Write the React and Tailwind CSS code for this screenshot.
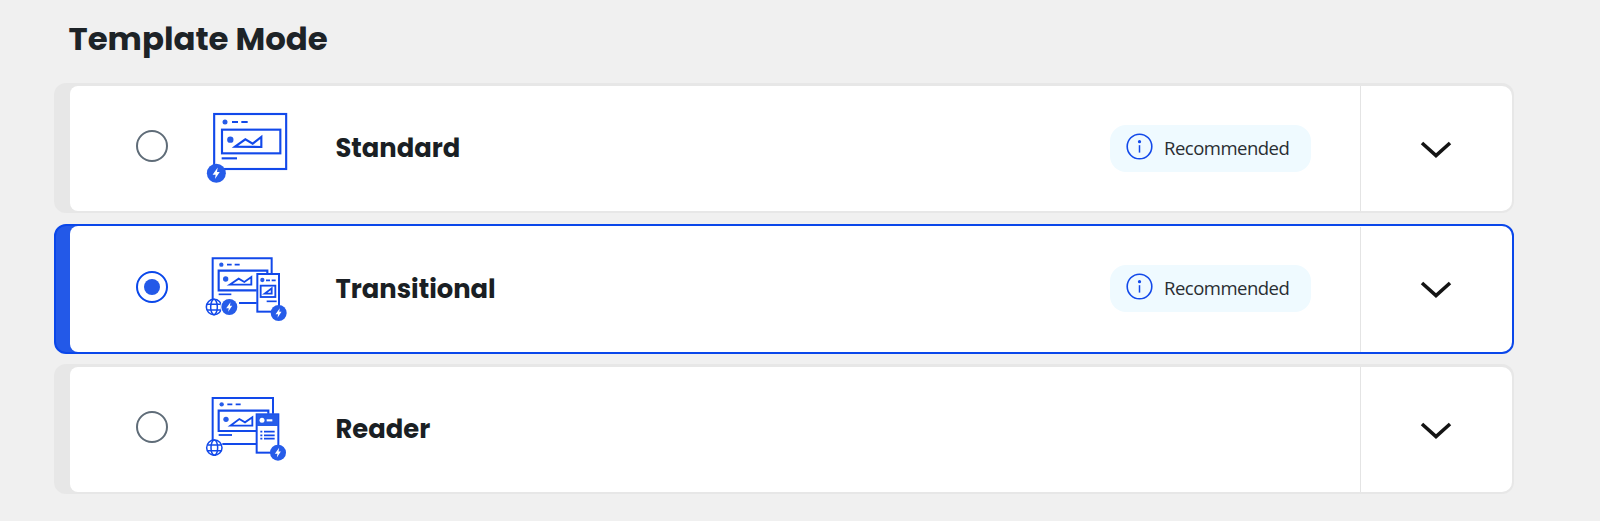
// ==========================================
// TemplateModes — pick how page templates are served
// ==========================================
import { useState } from "react";
import clsx from "clsx";

const MODES = [
  { id: "standard", title: "Standard", recommended: true, Icon: StandardIcon },
  {
    id: "transitional",
    title: "Transitional",
    recommended: true,
    Icon: TransitionalIcon,
  },
  { id: "reader", title: "Reader", recommended: false, Icon: ReaderIcon },
];

function IconFrame({ children }) {
  return (
    <svg
      viewBox="0 0 330 285"
      className="h-[95px] w-[110px] shrink-0"
      fill="none"
      stroke="#1249ea"
      strokeWidth="6.4"
    >
      {children}
    </svg>
  );
}

function Bolt({ cx, cy, r }) {
  return (
    <g transform={`translate(${cx} ${cy}) scale(${r / 28})`} stroke="none">
      <circle r="28" fill="#265ce9" />
      <path d="M4 -17 L-11 4 H-2 L-4 17 L10 -4 H2 Z" fill="#fff" />
    </g>
  );
}

function Globe({ cx, cy }) {
  return (
    <g transform={`translate(${cx} ${cy})`} strokeWidth="4.5">
      <circle r="23" fill="#fff" />
      <ellipse rx="10" ry="23" />
      <path d="M-21 -8 H21 M-21 9 H21" />
    </g>
  );
}

function StandardIcon() {
  return (
    <IconFrame>
      <rect x="72.5" y="42" width="216" height="165" />
      <circle cx="105" cy="66" r="7.5" fill="#265ce9" stroke="none" />
      <path d="M126 66 H144 M154 66 H173" />
      <rect x="96" y="89" width="175" height="71" />
      <circle cx="121" cy="119" r="9.5" fill="#265ce9" stroke="none" />
      <path d="M135 140 L166 118 L188 131 L214 111 V141 Z" />
      <path d="M95 175 H141" />
      <Bolt cx={79} cy={220} r={28.5} />
    </IconFrame>
  );
}

function TransitionalIcon() {
  return (
    <IconFrame>
      <g transform="translate(0 -3)">
        <path d="M68 182 V55 H245 V101 M147 189 H200" strokeWidth="6" />
        <circle cx="94" cy="74" r="6.5" fill="#265ce9" stroke="none" />
        <path d="M111 74 H125 M134 74 H149" strokeWidth="5" />
        <path d="M200 151 H86 V92 H232 V101" />
        <circle cx="107" cy="117" r="8" fill="#265ce9" stroke="none" />
        <path d="M119 134 L146 116 L163 126 L184 111 V134 Z" strokeWidth="5.5" />
        <path d="M86 163 H124" strokeWidth="5" />
        <rect x="202" y="102" width="65" height="113" fill="#fff" strokeWidth="6" />
        <circle cx="217" cy="120" r="6.5" fill="#265ce9" stroke="none" />
        <path d="M228 121 H240 M245 121 H257" strokeWidth="5" />
        <rect x="212" y="137" width="44" height="34" strokeWidth="5.5" />
        <path d="M224 161 L245 145 V161 Z" strokeWidth="5.5" />
        <path d="M230 184 H260" strokeWidth="5" />
        <Globe cx={72} cy={201} />
        <circle cx="118" cy="201" r="27" fill="#fff" stroke="none" />
        <Bolt cx={118} cy={201} r={24} />
        <Bolt cx={266} cy={219} r={24} />
      </g>
    </IconFrame>
  );
}

function ReaderIcon() {
  return (
    <IconFrame>
      <g transform="translate(0 12)">
        <path d="M68 170 V39 H249 V86 M97 177 H198" strokeWidth="6" />
        <circle cx="95" cy="58" r="6.5" fill="#265ce9" stroke="none" />
        <path d="M112 58 H127 M137 58 H152" strokeWidth="5" />
        <path d="M200 138 H86 V77 H235 V86" />
        <circle cx="108" cy="103" r="8" fill="#265ce9" stroke="none" />
        <path d="M121 122 L148 102 L165 112 L187 97 V122 Z" strokeWidth="5.5" />
        <path d="M86 150 H126" strokeWidth="5.5" />
        <rect x="200" y="88" width="65" height="115" fill="#fff" strokeWidth="6" />
        <rect x="200" y="88" width="65" height="35" fill="#265ce9" stroke="none" />
        <circle cx="216" cy="106" r="7.5" fill="#fff" stroke="none" />
        <path d="M230 106 H247" stroke="#fff" />
        <path
          d="M211 140 H217 M222 140 H254 M211 151 H217 M222 151 H254 M211 161 H217 M222 161 H254"
          strokeWidth="5"
        />
        <Globe cx={73} cy={188} />
        <Bolt cx={264} cy={203} r={24} />
      </g>
    </IconFrame>
  );
}

function RecommendedBadge() {
  return (
    <div className="mt-[38.5px] mr-[49px] flex h-[47px] w-[201px] items-center rounded-2xl bg-[#effaff] pl-4">
      <svg viewBox="0 0 27 27" className="-mt-1 size-[27px]" fill="none">
        <circle cx="13.5" cy="13.5" r="12.3" stroke="#1249ea" strokeWidth="1.6" />
        <circle cx="13.5" cy="8.7" r="1.6" fill="#1249ea" />
        <path d="M13.5 12.2 V19.6" stroke="#1249ea" strokeWidth="1.5" />
      </svg>
      <span className="ml-[11px] font-['Open_Sans','Noto_Sans',sans-serif] text-[18.5px] leading-none font-normal tracking-[-0.5px] text-[#2a2e32]">
        Recommended
      </span>
    </div>
  );
}

function ModeCard({ mode, selected, onSelect }) {
  const { title, recommended, Icon } = mode;

  return (
    <div
      className={clsx(
        "h-[130px] rounded-xl",
        selected
          ? "border-2 border-[#0a47ea] bg-[#2359e8] pl-[14px]"
          : "bg-[#e7e7e7] pt-[3px] pr-[2px] pb-[2px] pl-4",
      )}
    >
      <div
        className={clsx(
          "flex h-full rounded-lg rounded-r-[10px] bg-white",
          selected && "pt-px",
        )}
      >
        <button
          onClick={onSelect}
          className="flex flex-1 items-start text-left"
          aria-pressed={selected}
        >
          {/* Radio */}
          <span
            className={clsx(
              "mt-[44.3px] ml-[66px] flex size-8 shrink-0 items-center justify-center rounded-full border-2",
              selected ? "border-[#0a47ea]" : "border-[#5f6c78]",
            )}
          >
            {selected && <span className="size-4 rounded-full bg-[#2359e8]" />}
          </span>
          <span className="mt-[14.2px] ml-[22px]">
            <Icon />
          </span>
          <span className="mt-[46px] ml-[35.5px] font-[Poppins,Inter,sans-serif] text-[25.8px] leading-8 font-bold text-[#1a1f24]">
            {title}
          </span>
        </button>

        {recommended && <RecommendedBadge />}

        {/* Expand */}
        <button className="flex w-[152px] justify-center border-l border-[#e4e4e4]">
          <svg
            viewBox="0 0 32 20"
            className="mt-[53.7px] mr-px h-5 w-8"
            fill="none"
            stroke="#141414"
            strokeWidth="3.6"
          >
            <path d="M2 3 L16 15.5 L30 3" />
          </svg>
        </button>
      </div>
    </div>
  );
}

function App() {
  const [active, setActive] = useState("transitional");

  return (
    <div className="h-[521px] overflow-hidden bg-[#f0f0f0] pr-[86px] pl-[54px]">
      <h1 className="pt-[19px] pl-[14.5px] font-[Poppins,Inter,sans-serif] text-[32.4px] leading-10 font-bold text-[#1d2327]">
        Template Mode
      </h1>
      <div className="mt-6 flex flex-col gap-[10.6px]">
        {MODES.map((mode) => (
          <ModeCard
            key={mode.id}
            mode={mode}
            selected={mode.id === active}
            onSelect={() => setActive(mode.id)}
          />
        ))}
      </div>
    </div>
  );
}

export default App;
